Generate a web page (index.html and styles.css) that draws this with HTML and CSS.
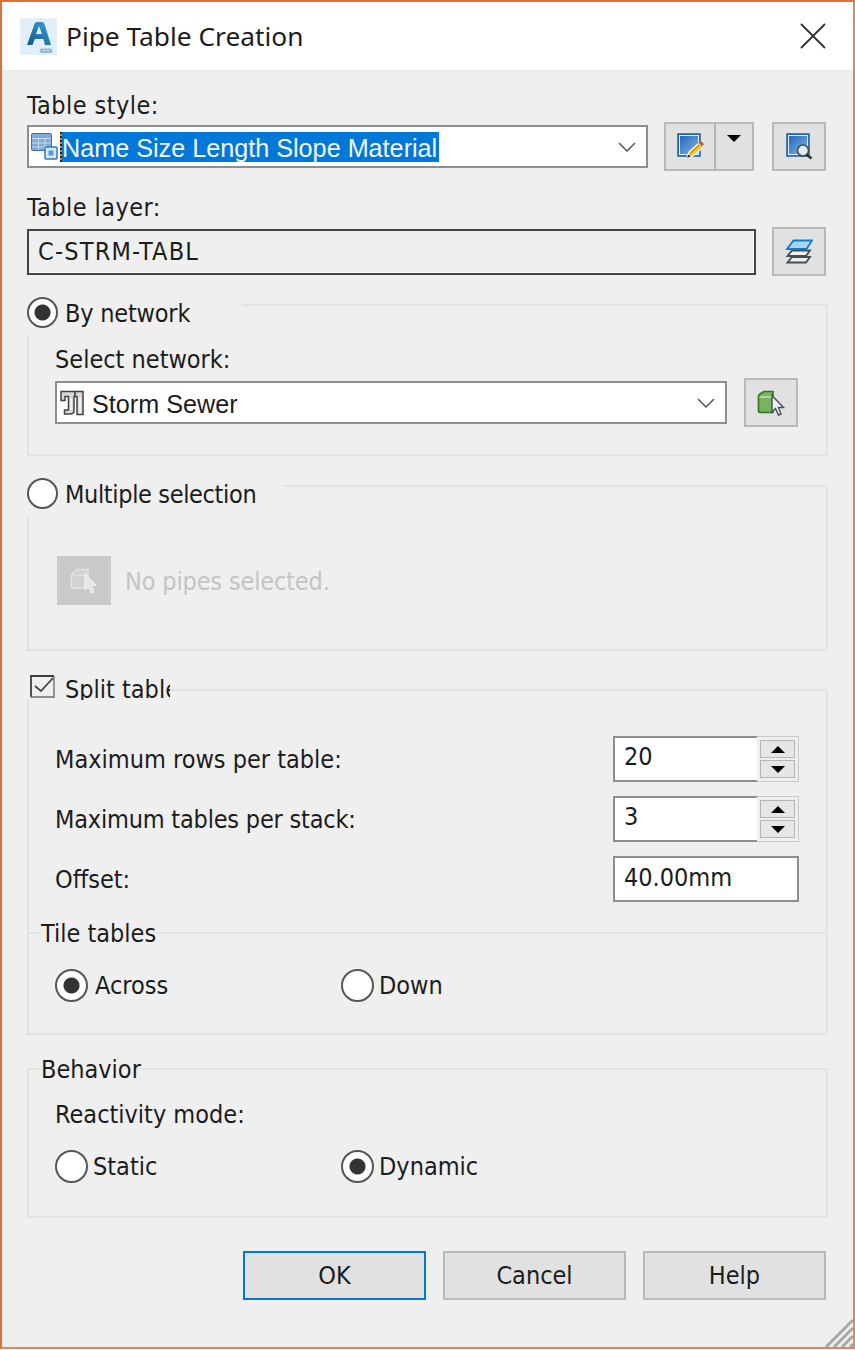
FILE: index.html
```html
<!DOCTYPE html>
<html lang="en">
<head>
<meta charset="utf-8">
<title>Pipe Table Creation</title>
<link rel="stylesheet" href="styles.css">
</head>
<body>
<div class="window">
  <header class="titlebar">
    <svg class="logo" viewBox="0 0 37 37"><defs><linearGradient id="ga" x1="0" y1="1" x2="1" y2="0"><stop offset="0" stop-color="#0f5a8c"/><stop offset="1" stop-color="#3d9ed6"/></linearGradient></defs><rect width="37" height="37" fill="#e2eff8"/><path d="M7 27 14.500 6Q15.300 4 17 4h5Q23.700 4 24.500 6L31 27h-6l-1.700-6h-8.500L12.500 27zM16 16h6L19 8z" fill="url(#ga)" fill-rule="evenodd"/><rect x="19.500" y="30.500" width="13" height="4.500" rx="2.200" fill="#8dbbd8"/><path d="M23 32.700h2M27 32.700h2" stroke="#e2eff8"/></svg>
    <h1 class="title">Pipe Table Creation</h1>
    <svg class="close" viewBox="0 0 26 26"><path d="M1 1 25 25M25 1 1 25" stroke="#333" stroke-width="1.800" fill="none"/></svg>
  </header>
  <main class="content">
    <div class="label label-wide">Table style:</div>
    <div class="row">
      <div class="combo combo-style">
        <svg class="style-icon" viewBox="0 0 27 27"><rect x="0.500" y="0.500" width="20" height="17" rx="1" fill="#7fa9d8" stroke="#3b6ea8"/><path d="M1 5.500h19M1 10h19M1 14h19M7.500 5v12M14 5v12" stroke="#c8dcf0"/><rect x="14" y="14" width="12" height="12" rx="1" fill="#d9e9f8" stroke="#2f78c4" stroke-width="1.500"/><rect x="17.500" y="17.500" width="5" height="5" fill="#5b98d8"/></svg>
        <span class="focus-mark"></span>
        <span class="selected">Name Size Length Slope Material</span>
        <svg class="chevron" viewBox="0 0 18 10"><path d="M1 1 9 9 17 1" fill="none" stroke="#555" stroke-width="1.500"/></svg>
      </div>
      <div class="split-button">
        <button class="btn-part btn-main" type="button">
          <svg class="icon" viewBox="0 0 28 28"><defs><linearGradient id="gb" x1="0" y1="0" x2="1" y2="1"><stop offset="0" stop-color="#1a5fb4"/><stop offset="1" stop-color="#8dbcec"/></linearGradient></defs><rect x="2" y="1" width="22" height="22" fill="url(#gb)" stroke="#1d5fa8" stroke-width="1.500"/><rect x="3.500" y="2.500" width="19" height="19" fill="none" stroke="#e6eff8"/><path d="M11 25 13 19 23 10 27.500 14 17 23z" fill="#f5c52e" stroke="#fff" stroke-width="1.200"/><path d="M14.500 20 23 12" stroke="#9a6a10"/><path d="M22 9.500 24.500 7.500 28 11 26 13.500z" fill="#b8683c"/><path d="M11 25 12.500 21.500 14.500 23.500z" fill="#222"/></svg>
        </button>
        <button class="btn-part btn-drop" type="button"><span class="drop-arrow"></span></button>
      </div>
      <button class="btn btn-icon btn-preview" type="button">
        <svg class="icon" viewBox="0 0 28 28"><defs><linearGradient id="gc" x1="0" y1="0" x2="1" y2="1"><stop offset="0" stop-color="#1a5fb4"/><stop offset="1" stop-color="#8dbcec"/></linearGradient></defs><rect x="2" y="1" width="22" height="22" fill="url(#gc)" stroke="#1d5fa8" stroke-width="1.500"/><rect x="3.500" y="2.500" width="19" height="19" fill="none" stroke="#e6eff8"/><circle cx="18" cy="17.500" r="5.500" fill="#e4ecef" stroke="#4a4a4a" stroke-width="1.600"/><path d="M21.500 21.500 26.500 25.500" stroke="#333" stroke-width="2.800"/></svg>
      </button>
    </div>
    <div class="label label-layer label-wide">Table layer:</div>
    <div class="row row-layer">
      <div class="readonly">C-STRM-TABL</div>
      <button class="btn btn-icon" type="button">
        <svg class="icon" viewBox="0 0 28 26"><path d="M2.500 23.500 7 18H25L21 23.500z" fill="#eef0f1" stroke="#444c54" stroke-width="1.800"/><path d="M2.500 17 7 11.500H25L21 17z" fill="#eef0f1" stroke="#444c54" stroke-width="1.800"/><path d="M2 10 8.500 1.500H27L21.500 10z" fill="#a9d6ee" stroke="#1479c9" stroke-width="1.800"/></svg>
      </button>
    </div>

    <section class="group group-network">
      <div class="legend legend-radio legend-network"><span class="radio radio-on"></span><span class="legend-text">By network</span></div>
      <div class="inner">
        <div class="label label-network">Select network:</div>
        <div class="row">
          <div class="combo combo-network">
            <svg class="pipe-icon" viewBox="0 0 24 26"><path d="M1 1.500H15V6.500H14V21Q14 24 10 24H4.500V20H8.500V6.500H5V10.500H1z" fill="#d8d8d8" stroke="#444" stroke-width="1.500"/><path d="M15 1.500H23V24.500H17V6.500H15z" fill="#d8d8d8" stroke="#444" stroke-width="1.500"/><path d="M20 7V23M11 8V20" stroke="#fff" stroke-width="1.200"/></svg>
            <span class="combo-text">Storm Sewer</span>
            <svg class="chevron" viewBox="0 0 18 10"><path d="M1 1 9 9 17 1" fill="none" stroke="#555" stroke-width="1.500"/></svg>
          </div>
          <button class="btn btn-icon" type="button">
            <svg class="icon" viewBox="0 0 28 28"><path d="M1.500 7.500Q1.500 6 3 5L7 2.500H16V23.500H3Q1.500 23.500 1.500 22z" fill="#7cb062" stroke="#2f7a1f" stroke-width="1.700"/><path d="M2.500 8H15" fill="none" stroke="#c4e2b4" stroke-width="1.500"/><path d="M15 6.500V23L18.500 19.500 21.500 26 24 25 21.500 18.500H26.500z" fill="#eef0f2" stroke="#47505a" stroke-width="1.400"/></svg>
          </button>
        </div>
      </div>
    </section>

    <section class="group group-multiple">
      <div class="legend legend-radio legend-multiple"><span class="radio"></span><span class="legend-text">Multiple selection</span></div>
      <div class="inner inner-disabled">
        <button class="btn-disabled" type="button" disabled>
          <svg class="icon" viewBox="0 0 28 28"><path d="M1.500 7.500 7 2.500H18V21H1.500z" fill="#d2d2d2" stroke="#e4e4e4" stroke-width="1.500"/><path d="M2 8H15" fill="none" stroke="#e4e4e4"/><path d="M15 6.500V23L18.500 19.500 21.500 26 24 25 21.500 18.500H26.500z" fill="#e6e6e6" stroke="#f4f4f4"/></svg>
        </button>
        <span class="disabled-text">No pipes selected.</span>
      </div>
    </section>

    <section class="group group-split">
      <div class="legend legend-split"><svg class="check" viewBox="0 0 25 23"><path d="M1 22V1H24" fill="none" stroke="#3d3d3d" stroke-width="1.800"/><path d="M24 1V22H1" fill="none" stroke="#6f6f6f" stroke-width="1.400"/><path d="M5 11 11 16 23 3" fill="none" stroke="#444" stroke-width="1.800"/></svg><span class="legend-text">Split table</span></div>
      <div class="inner inner-fields">
        <div class="field-row"><span class="text">Maximum rows per table:</span>
          <div class="spin"><span class="spin-value">20</span><div class="spin-buttons"><span class="spin-btn"><i class="tri tri-up"></i></span><span class="spin-btn"><i class="tri tri-down"></i></span></div></div>
        </div>
        <div class="field-row"><span class="text text-tight">Maximum tables per stack:</span>
          <div class="spin"><span class="spin-value">3</span><div class="spin-buttons"><span class="spin-btn"><i class="tri tri-up"></i></span><span class="spin-btn"><i class="tri tri-down"></i></span></div></div>
        </div>
        <div class="field-row"><span class="text">Offset:</span><div class="input">40.00mm</div></div>
      </div>
      <div class="tile">
        <div class="legend legend-small legend-tile">Tile tables</div>
        <div class="radio-row radio-row-tile">
          <label class="choice choice-wide"><span class="radio radio-small radio-on"></span><span class="text">Across</span></label>
          <label class="choice"><span class="radio radio-small"></span><span class="text">Down</span></label>
        </div>
      </div>
    </section>

    <section class="group group-behavior">
      <div class="legend legend-small legend-behavior">Behavior</div>
      <div class="inner">
        <div class="label label-react">Reactivity mode:</div>
        <div class="radio-row radio-row-behavior">
          <label class="choice"><span class="radio radio-small"></span><span class="text">Static</span></label>
          <label class="choice"><span class="radio radio-small radio-on"></span><span class="text">Dynamic</span></label>
        </div>
      </div>
    </section>

    <footer class="actions">
      <button class="btn btn-action btn-default" type="button">OK</button>
      <button class="btn btn-action" type="button">Cancel</button>
      <button class="btn btn-action" type="button">Help</button>
    </footer>
  </main>
  <svg class="grip" viewBox="0 0 30 30"><path d="M30 3 3 30M30 11 11 30M30 19 19 30M30 27 27 30" stroke="#a8a8a8" stroke-width="3" fill="none"/></svg>
</div>
</body>
</html>
```

FILE: styles.css
```css
* { box-sizing: border-box; }
html, body { margin: 0; padding: 0; background: #fff; }
body { width: 855px; height: 1350px; overflow: hidden; font-family: "DejaVu Sans Condensed", "DejaVu Sans", sans-serif; font-stretch: condensed; font-size: 25px; color: #1c1c1c; }
button { font: inherit; color: inherit; padding: 0; }

.window { position: relative; width: 855px; height: 1349px; border: 2px solid #e2855a; border-left-color: #e0703a; border-top-color: #e0703a; background: #efefef; overflow: hidden; }

.titlebar { display: flex; align-items: center; height: 69px; background: #fff; padding-left: 18px; padding-right: 27px; border-bottom: 1px solid #e8e8e8; }
.logo { width: 37px; height: 37px; flex: none; }
.title { margin: 0 0 0 9px; font-family: "Noto Sans", sans-serif; font-stretch: normal; font-size: 26.300px; font-weight: 400; flex: 1; color: #1c1c1c; }
.close { width: 26px; height: 26px; flex: none; }

.content { padding: 17px 25px 0; }
.label { line-height: 36px; height: 34px; }
.label-wide { letter-spacing: 0.45px; }
.label-layer { margin-top: 19px; }
.label-network { margin-top: 5px; }
.label-react { margin-top: 13px; }
.text-tight { letter-spacing: -0.2px; }

.row { display: flex; align-items: center; height: 49px; gap: 16px; }
.row-layer { margin-top: 3px; }

.combo { display: flex; align-items: center; height: 43px; background: #fff; border: 2px solid #8e8e8e; flex: none; }
.combo-style { width: 621px; padding-left: 2px; }
.combo-network { width: 672px; padding-left: 3px; }
.style-icon { width: 27px; height: 27px; flex: none; }
.focus-mark { width: 2px; height: 30px; margin-left: 2px; flex: none; background: repeating-linear-gradient(#222 0 2px, #e8801a 2px 4px); }
.selected { background: #0078d7; color: #f4f8fc; font-family: "Liberation Sans", Arial, sans-serif; font-stretch: normal; font-size: 25.200px; line-height: 33px; height: 30px; padding-right: 2px; white-space: nowrap; }
.pipe-icon { width: 24px; height: 26px; flex: none; }
.combo-text { margin-left: 8px; margin-top: 4px; font-family: "Liberation Sans", Arial, sans-serif; font-stretch: normal; font-size: 25.200px; }
.chevron { width: 18px; height: 10px; margin-left: auto; margin-right: 10px; flex: none; }

.split-button { display: flex; height: 49px; width: 90px; flex: none; background: #e1e1e1; border: 2px solid #b9b9b9; }
.btn-part { background: none; border: 0; height: 45px; display: flex; }
.btn-main { width: 50px; align-items: center; justify-content: center; border-right: 2px solid #b4b4b4; }
.btn-drop { width: 36px; justify-content: center; padding-top: 11px; }
.drop-arrow { width: 0; height: 0; border-left: 7px solid transparent; border-right: 7px solid transparent; border-top: 7px solid #000; }

.btn { background: #e1e1e1; border: 2px solid #b9b9b9; flex: none; }
.btn-icon { width: 54px; height: 49px; display: flex; align-items: center; justify-content: center; }
.btn-preview { margin-left: 2px; }
.icon { width: 28px; height: 28px; }

.readonly { width: 729px; height: 46px; flex: none; border: 2px solid #444; background: #efefef; box-shadow: inset -1px -1px 0 #fff; padding-left: 9px; line-height: 42px; letter-spacing: 1.200px; }

.group { border: 2px solid #e3e3e3; }
.group-network { margin-top: 28px; height: 152px; }
.group-multiple { margin-top: 29px; height: 166px; }
.group-split { margin-top: 38px; height: 346px; }
.group-behavior { margin-top: 33px; height: 150px; }

.legend { background: #efefef; white-space: nowrap; }
.legend-radio { display: flex; align-items: flex-start; gap: 7px; height: 40px; margin: -9px 0 0 -2px; line-height: 33px; }
.legend-network { width: 215px; letter-spacing: -0.2px; }
.legend-multiple { width: 257px; letter-spacing: -0.35px; }
.legend-split { display: flex; align-items: flex-start; height: 25px; width: 143px; margin: -16px 0 0 -2px; overflow: hidden; line-height: 36px; padding-left: 3px; }
.check { width: 25px; height: 23px; flex: none; }
.legend-text { white-space: nowrap; }
.legend-split .legend-text { margin-left: 10px; margin-top: -3px; }
.legend-small { line-height: 32px; height: 30px; }
.legend-tile { margin: -16px 0 0 12px; width: 115px; }
.legend-behavior { margin: -16px 0 0 12px; width: 97px; }

.radio { display: block; width: 31px; height: 31px; border-radius: 50%; border: 2px solid #555; background: #fff; flex: none; }
.radio-small { width: 33px; height: 33px; }
.radio-on { background: radial-gradient(circle, #333 0 7.500px, #fff 8.500px); }

.inner { padding-left: 26px; padding-right: 27px; }
.inner .row { margin-top: 2px; gap: 17px; }
.inner-disabled { display: flex; align-items: center; gap: 14px; margin-top: 38px; padding-left: 28px; }
.btn-disabled { width: 54px; height: 49px; border: 0; background: #c9c9c9; display: flex; align-items: center; justify-content: center; flex: none; }
.disabled-text { color: #c4c4c4; letter-spacing: -0.15px; padding-top: 2px; }

.inner-fields { margin-top: 36px; display: flex; flex-direction: column; gap: 14px; line-height: 32px; }
.field-row { display: flex; align-items: center; justify-content: space-between; height: 46px; }
.field-row .text { padding-top: 2px; }
.spin { width: 186px; height: 46px; display: flex; flex: none; }
.spin-value { width: 144px; height: 46px; background: #fff; border: 2px solid #8e8e8e; border-right: 0; padding-left: 9px; line-height: 38px; }
.spin-buttons { width: 42px; height: 46px; display: flex; flex-direction: column; gap: 2px; padding: 3px; border: 1px solid #c9c9c9; border-left: 0; }
.spin-btn { flex: 1; background: #e6e6e6; border: 1px solid #b5b5b5; display: flex; align-items: center; justify-content: center; }
.tri { width: 0; height: 0; border-left: 7px solid transparent; border-right: 7px solid transparent; }
.tri-up { border-bottom: 7px solid #000; }
.tri-down { border-top: 7px solid #000; }
.input { width: 186px; height: 46px; flex: none; background: #fff; border: 2px solid #8e8e8e; padding-left: 9px; line-height: 40px; }

.tile { margin-top: 30px; border-top: 2px solid #e3e3e3; }
.radio-row { display: flex; padding-left: 26px; }
.radio-row-tile { margin-top: 21px; }
.radio-row-behavior { margin-top: 19px; padding-left: 0; }
.choice { display: flex; align-items: center; gap: 5px; width: 286px; height: 33px; flex: none; }
.choice-wide { gap: 7px; }

.actions { display: flex; justify-content: flex-end; gap: 17px; margin-top: 33px; padding-right: 2px; }
.btn-action { width: 183px; height: 49px; }
.btn-default { border-color: #0078d7; }

.grip { position: absolute; right: 0; bottom: 0; width: 30px; height: 30px; }
```
